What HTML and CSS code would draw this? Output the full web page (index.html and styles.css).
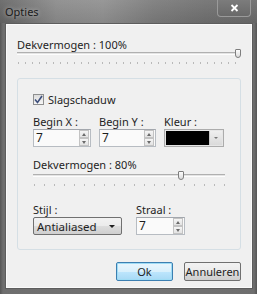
FILE: index.html
```html
<!DOCTYPE html>
<html lang="nl">
<head>
    <meta charset="UTF-8">
    <meta name="viewport" content="width=device-width, initial-scale=1.0">
    <title>Opties</title>
    <link rel="stylesheet" href="styles.css">
</head>
<body>
    <div class="window">
        <div class="titlebar">
            <span class="title">Opties</span>
            <span class="close">
                <svg width="9" height="8" viewBox="0 0 9 8"><path d="M1.5 1 L7.5 7 M7.5 1 L1.5 7" stroke="#fff" stroke-width="1.8"/></svg>
            </span>
        </div>
        <div class="client">
            <div class="caption">Dekvermogen : 100%</div>
            <div class="slider">
                <div class="track"></div>
                <div class="thumb" style="left: 218px"></div>
            </div>
            <div class="ticks ticks-fine"></div>

            <div class="group">
                <label class="check">
                    <span class="box">
                        <svg width="9" height="9" viewBox="0 0 9 9"><path d="M1 4.5 L3.5 7.5 L8 1" fill="none" stroke="#3d4f7c" stroke-width="1.6"/></svg>
                    </span>
                    Slagschaduw
                </label>

                <div class="row row-three">
                    <div class="field">
                        <span class="caption">Begin X :</span>
                        <div class="spin">
                            <span class="value">7</span>
                            <span class="arrows"><span class="up"></span><span class="down"></span></span>
                        </div>
                    </div>
                    <div class="field">
                        <span class="caption">Begin Y :</span>
                        <div class="spin">
                            <span class="value">7</span>
                            <span class="arrows"><span class="up"></span><span class="down"></span></span>
                        </div>
                    </div>
                    <div class="field">
                        <span class="caption">Kleur :</span>
                        <div class="color">
                            <span class="swatch"></span>
                            <span class="drop"></span>
                        </div>
                    </div>
                </div>

                <div class="caption">Dekvermogen : 80%</div>
                <div class="slider">
                    <div class="track"></div>
                    <div class="thumb" style="left: 145px"></div>
                </div>
                <div class="ticks ticks-wide"></div>

                <div class="row row-two">
                    <div class="field">
                        <span class="caption">Stijl :</span>
                        <div class="combo">
                            <span>Antialiased</span>
                            <span class="arrow"></span>
                        </div>
                    </div>
                    <div class="field">
                        <span class="caption">Straal :</span>
                        <div class="spin">
                            <span class="value">7</span>
                            <span class="arrows"><span class="up"></span><span class="down"></span></span>
                        </div>
                    </div>
                </div>
            </div>

            <div class="buttons">
                <button class="btn btn-default">Ok</button>
                <button class="btn">Annuleren</button>
            </div>
        </div>
    </div>
</body>
</html>
```

FILE: styles.css
```css
body {
    margin: 0;
    padding: 0;
    font-family: "Noto Sans", Arial, sans-serif;
    font-size: 11px;
    color: #1e1e1e;
    background: #6b6b6b;
}

.window {
    width: 257px;
    height: 294px;
    box-sizing: border-box;
    display: flex;
    flex-direction: column;
    background: linear-gradient(to right, #555 0, #6e6e6e 3px, #737373 50%, #6e6e6e calc(100% - 3px), #555 100%);
}

.titlebar {
    height: 23px;
    display: flex;
    align-items: flex-start;
    background:
        linear-gradient(rgba(255, 255, 255, 0.08), rgba(0, 0, 0, 0.05)),
        linear-gradient(to right, #646464 0%, #8a8a8a 22%, #8f8f8f 40%, #7a7a7a 60%, #6f6f6f 80%, #6a6a6a 100%);
}

.title {
    margin: 4px 0 0 5px;
    font-size: 11px;
    color: #1a1a1a;
    text-shadow: 0 0 4px rgba(255, 255, 255, 0.6);
}

.close {
    margin-left: auto;
    margin-right: 6px;
    width: 34px;
    height: 17px;
    display: flex;
    align-items: center;
    justify-content: center;
    border: 1px solid #9a9a9a;
    border-top: none;
    border-radius: 0 0 4px 4px;
    background: linear-gradient(#7c7c7c, #696969);
    box-sizing: border-box;
}

.client {
    flex: 1;
    margin: 0 4px 5px 5px;
    padding: 13px 11px 0 11px;
    background: #f0f0f0;
    border: 1px solid #5d5d5d;
    box-shadow: inset 0 0 0 1px #fafafa;
    display: flex;
    flex-direction: column;
}

.caption {
    display: block;
    line-height: 15px;
}

.slider {
    position: relative;
    height: 11px;
    margin-top: -4px;
}

.group .slider {
    margin-top: -2px;
}

.track {
    position: absolute;
    left: 0;
    right: 0;
    top: 4px;
    height: 3px;
    box-sizing: border-box;
    border-top: 1px solid #b0b0b0;
    border-bottom: 1px solid #fdfdfd;
    background: #e4e4e4;
}

.thumb {
    position: absolute;
    top: 1px;
    width: 6px;
    height: 9px;
    box-sizing: border-box;
    border: 1px solid #7e7e7e;
    border-radius: 1px 1px 3px 3px;
    background: linear-gradient(#fdfdfd, #dcdcdc);
}

.ticks {
    height: 2px;
    margin-top: 3px;
    margin-left: 1px;
}

.ticks-fine {
    background: repeating-linear-gradient(to right, #b9b9b9 0 1px, transparent 1px 7px);
}

.ticks-wide {
    background: repeating-linear-gradient(to right, #b9b9b9 0 1px, transparent 1px 10px);
}

.group {
    margin-top: 14px;
    height: 172px;
    box-sizing: border-box;
    border: 1px solid #d5dfe5;
    border-radius: 3px;
    padding: 13px 15px 0 15px;
    display: flex;
    flex-direction: column;
}

.check {
    display: flex;
    align-items: center;
    gap: 4px;
    line-height: 15px;
}

.box {
    width: 11px;
    height: 11px;
    box-sizing: border-box;
    border: 1px solid #8e8f8f;
    background: linear-gradient(#dcdcdc, #f6f6f6);
    display: flex;
    align-items: center;
    justify-content: center;
}

.row {
    display: grid;
    margin-top: 7px;
}

.row-three {
    grid-template-columns: 58px 57px 60px;
    column-gap: 8px;
}

.row-two {
    margin-top: 16px;
    grid-template-columns: 89px 49px;
    column-gap: 14px;
}

.group > .caption {
    margin-top: 10px;
}

.field {
    display: flex;
    flex-direction: column;
}

.spin {
    height: 18px;
    box-sizing: border-box;
    display: flex;
    border: 1px solid #b7bcc2;
    border-top-color: #a3a7ad;
    background: #fafafa;
}

.spin .value {
    flex: 1;
    padding-left: 2px;
    line-height: 16px;
    font-size: 12px;
}

.arrows {
    width: 10px;
    margin: 0 1px 0 0;
    display: flex;
    flex-direction: column;
}

.arrows span {
    flex: 1;
    box-sizing: border-box;
    border: 1px solid #c3c3c3;
    background: linear-gradient(#f5f5f5, #e3e3e3);
    position: relative;
}

.arrows span::after {
    content: "";
    position: absolute;
    left: 2px;
    top: 2px;
    border-left: 2px solid transparent;
    border-right: 2px solid transparent;
}

.arrows .up::after {
    border-bottom: 3px solid #6a6a6a;
}

.arrows .down::after {
    border-top: 3px solid #6a6a6a;
}

.color {
    height: 18px;
    box-sizing: border-box;
    display: flex;
    padding: 1px;
    border: 1px solid #acacac;
    background: #e6e6e6;
}

.swatch {
    flex: 1;
    background: #000;
}

.drop {
    width: 12px;
    position: relative;
    background: linear-gradient(#efefef, #dadada);
    border-left: 1px solid #c8c8c8;
}

.drop::after {
    content: "";
    position: absolute;
    left: 4px;
    top: 6px;
    border-left: 2px solid transparent;
    border-right: 2px solid transparent;
    border-top: 2px solid #777;
}

.combo {
    height: 18px;
    box-sizing: border-box;
    display: flex;
    align-items: center;
    justify-content: space-between;
    padding: 0 6px 0 3px;
    border: 1px solid #707070;
    border-radius: 2px;
    background: linear-gradient(#f2f2f2 0%, #ebebeb 50%, #dddddd 50%, #cfcfcf 100%);
    font-size: 11.5px;
}

.arrow {
    border-left: 3px solid transparent;
    border-right: 3px solid transparent;
    border-top: 3px solid #1e1e1e;
}

.buttons {
    display: flex;
    justify-content: flex-end;
    gap: 11px;
    margin-top: 12px;
}

.btn {
    width: 57px;
    height: 19px;
    padding: 0;
    font-family: inherit;
    font-size: 11px;
    color: #1e1e1e;
    border: 1px solid #707070;
    border-radius: 2px;
    background: linear-gradient(#f2f2f2 0%, #ebebeb 50%, #dddddd 50%, #cfcfcf 100%);
}

.btn-default {
    border-color: #3c7fb1;
    box-shadow: inset 0 0 0 1px #9fdcf5;
    background: linear-gradient(#eaf6fd 0%, #d9f0fc 50%, #bee6fd 50%, #a7d9f5 100%);
}
```
